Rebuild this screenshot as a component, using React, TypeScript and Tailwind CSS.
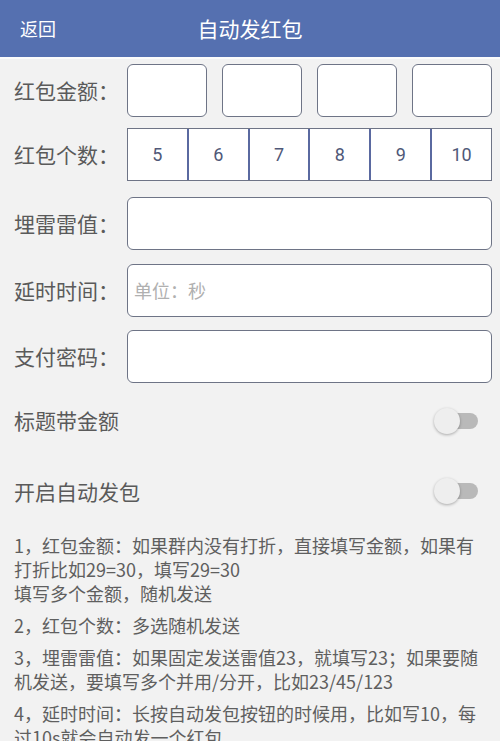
import type { ReactNode } from 'react';

// Auto red-packet settings screen: header, form rows, two switches and notes.

const counts = ['5', '6', '7', '8', '9', '10'];

const notes: string[][] = [
  ['1，红包金额：如果群内没有打折，直接填写金额，如果有打折比如29=30，填写29=30', '填写多个金额，随机发送'],
  ['2，红包个数：多选随机发送'],
  ['3，埋雷雷值：如果固定发送雷值23，就填写23；如果要随机发送，要填写多个并用/分开，比如23/45/123'],
  ['4，延时时间：长按自动发包按钮的时候用，比如写10，每过10s就会自动发一个红包'],
];

function Label({ text }: { text: string }): ReactNode {
  return <span className="w-[113px] shrink-0 text-[21px] text-[#5a5a5a]">{text}</span>;
}

function Field({ label, placeholder, className }: { label: string; placeholder?: string; className: string }): ReactNode {
  return (
    <div className={`flex items-center pl-[14px] pr-[8px] ${className}`}>
      <Label text={label} />
      <div className="flex h-[53px] flex-1 items-center rounded-[6px] border-[1.5px] border-[#6e7486] bg-white px-[6px]">
        {placeholder === undefined ? null : (
          <span className="text-[18px] text-[#b0b0b0]">{placeholder}</span>
        )}
      </div>
    </div>
  );
}

function Toggle(): ReactNode {
  return (
    <div className="relative h-[26px] w-[44px]">
      <div className="absolute right-0 top-[5px] h-[16px] w-[32px] rounded-full bg-[#b9b9b9]" />
      <div className="absolute left-0 top-0 h-[26px] w-[26px] rounded-full bg-[#eeeeee] shadow-[0_1px_3px_rgba(0,0,0,0.3)]" />
    </div>
  );
}

function SwitchRow({ label, className }: { label: string; className: string }): ReactNode {
  return (
    <div className={`flex items-center justify-between pl-[14px] pr-[22px] ${className}`}>
      <span className="text-[21px] text-[#5a5a5a]">{label}</span>
      <Toggle />
    </div>
  );
}

export default function App(): ReactNode {
  return (
    <div className="h-[741px] w-[500px] overflow-hidden bg-[#f2f2f2] font-['Noto_Sans_CJK_SC',sans-serif]">
      <div className="grid h-[57px] grid-cols-[1fr_auto_1fr] items-center bg-[#5570b0] text-white">
        <span className="pl-[20px] text-[18px]">返回</span>
        <span className="text-[21px]">自动发红包</span>
        <span />
      </div>
      <div className="h-[2px] bg-[#fbfbfb]" />

      <div className="mt-[5px] flex items-center pl-[14px] pr-[8px]">
        <Label text="红包金额：" />
        <div className="grid flex-1 grid-cols-4 gap-[15px]">
          {[0, 1, 2, 3].map((i) => (
            <div key={i} className="h-[53px] rounded-[6px] border-[1.5px] border-[#6e7486] bg-white" />
          ))}
        </div>
      </div>

      <div className="mt-[11px] flex items-center pl-[14px] pr-[8px]">
        <Label text="红包个数：" />
        <div className="flex h-[53px] flex-1 border border-[#6e7486] bg-white">
          {counts.map((c, i) => (
            <div
              key={c}
              className={`flex flex-1 items-center justify-center font-['Roboto',sans-serif] text-[18px] text-[#4f5878] ${i === 0 ? '' : 'border-l-2 border-[#5a69a0]'}`}
            >
              {c}
            </div>
          ))}
        </div>
      </div>

      <Field label="埋雷雷值：" className="mt-[16px]" />
      <Field label="延时时间：" placeholder="单位：秒" className="mt-[14px]" />
      <Field label="支付密码：" className="mt-[13px]" />

      <SwitchRow label="标题带金额" className="mt-[22px]" />
      <SwitchRow label="开启自动发包" className="mt-[39px]" />

      <div className="mt-[26px] flex flex-col gap-[8px] pl-[14px] pr-[12px] text-[18px] leading-[24px] text-[#5f5f5f]">
        {notes.map((lines, i) => (
          <div key={i}>
            {lines.map((l) => (
              <p key={l}>{l}</p>
            ))}
          </div>
        ))}
      </div>
    </div>
  );
}
